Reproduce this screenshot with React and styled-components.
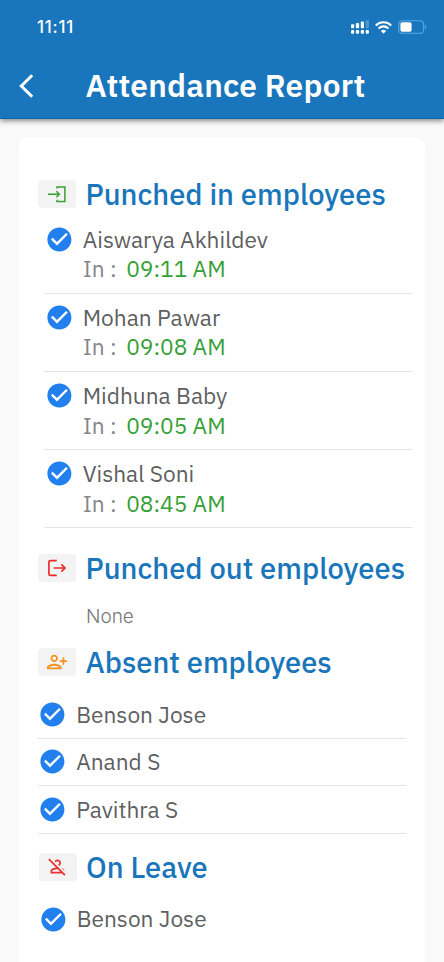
import React from "react";
import styled, { createGlobalStyle } from "styled-components";
import {
  MdCheckCircle,
  MdOutlinePersonAddAlt1,
  MdOutlinePersonOff,
} from "react-icons/md";

const punchedIn = [
  { name: "Aiswarya Akhildev", time: "09:11 AM" },
  { name: "Mohan Pawar", time: "09:08 AM" },
  { name: "Midhuna Baby", time: "09:05 AM" },
  { name: "Vishal Soni", time: "08:45 AM" },
];
const absent = ["Benson Jose", "Anand S", "Pavithra S"];
const onLeave = ["Benson Jose"];

const SignalIcon = () => (
  <svg width="18" height="14" viewBox="0 0 18 14" fill="#fff">
    <rect x="0" y="4.2" width="3.2" height="4" rx="1" />
    <rect x="4.9" y="3" width="3.2" height="5.2" rx="1" />
    <rect x="9.8" y="1.6" width="3.2" height="6.6" rx="1" />
    <rect x="14.7" y="0.2" width="3.2" height="8" rx="1" opacity="0.25" />
    <rect x="0" y="10" width="3.2" height="3.8" rx="1" />
    <rect x="4.9" y="10" width="3.2" height="3.8" rx="1" />
    <rect x="9.8" y="10" width="3.2" height="3.8" rx="1" />
    <rect x="14.7" y="10" width="3.2" height="3.8" rx="1" />
  </svg>
);

const WifiIcon = () => (
  <svg width="17" height="13" viewBox="0 0 17 13" fill="none" stroke="#fff">
    <path d="M0.8 4.4a11 11 0 0 1 15.4 0" strokeWidth="2.1" />
    <path d="M3.6 7.4a7 7 0 0 1 9.8 0" strokeWidth="2.1" />
    <path d="M8.5 12.8l-2.6-2.7a3.7 3.7 0 0 1 5.2 0z" fill="#fff" stroke="none" />
  </svg>
);

const BatteryIcon = () => (
  <svg width="29" height="14" viewBox="0 0 29 14">
    <rect x="0.7" y="0.7" width="25" height="12.6" rx="3.6" fill="none" stroke="#5aa9e2" strokeWidth="1.1" />
    <rect x="2.4" y="2.3" width="11.2" height="9.4" rx="1.8" fill="#fff" />
    <path d="M27 4.8c1.6.8 1.6 3.6 0 4.4z" fill="#5aa9e2" />
  </svg>
);

const BackIcon = () => (
  <svg width="15" height="24" viewBox="0 0 15 24" fill="none" stroke="#fff" strokeWidth="3">
    <path d="M13.2 1.3L2.3 12l10.9 10.7" />
  </svg>
);

const LoginIcon = () => (
  <svg width="20" height="18" viewBox="0 0 20 18" fill="none" stroke="#35a035" strokeWidth="1.5">
    <path d="M10 3.6V1.9h7.9v14.6H10v-1.7" />
    <path d="M1 9.2h11.4M9.4 6.2l3 3-3 3" />
  </svg>
);

const LogoutIcon = () => (
  <svg width="20" height="18" viewBox="0 0 20 18" fill="none" stroke="#ee2b2b" strokeWidth="1.7">
    <path d="M9.8 1.6H3.4Q1.9 1.6 1.9 3v12q0 1.4 1.5 1.4h6.4" />
    <path d="M6.6 9h11.2M14.4 5.4L18 9l-3.6 3.6" />
  </svg>
);

const Section = ({ icon, title, top, offset }) => (
  <SectionHeader $top={top} $offset={offset}>
    <Badge>{icon}</Badge>
    <SectionTitle>{title}</SectionTitle>
  </SectionHeader>
);

const App = () => {
  return (
    <>
      <GlobalStyle />
      <Screen>
        <Header>
          <StatusBar>
            <Clock>11:11</Clock>
            <StatusIcons>
              <SignalIcon />
              <WifiIcon />
              <BatteryIcon />
            </StatusIcons>
          </StatusBar>
          <TitleBar>
            <BackIcon />
            <PageTitle>Attendance Report</PageTitle>
          </TitleBar>
        </Header>
        <Card>
          <Section icon={<LoginIcon />} title="Punched in employees" top={42.6} />
          <PunchList>
            {punchedIn.map((person) => (
              <PunchRow key={person.name}>
                <Check />
                <div>
                  <Name>{person.name}</Name>
                  <TimeLine>
                    <TimeLabel>In :</TimeLabel>
                    <Time>{person.time}</Time>
                  </TimeLine>
                </div>
              </PunchRow>
            ))}
          </PunchList>
          <Section icon={<LogoutIcon />} title="Punched out employees" top={25.7} />
          <EmptyText>None</EmptyText>
          <Section
            icon={<MdOutlinePersonAddAlt1 size={22} color="#f39422" />}
            title="Absent employees"
            top={18}
          />
          <PlainList $top={14.8}>
            {absent.map((name) => (
              <PlainRow key={name}>
                <Check />
                <Name>{name}</Name>
              </PlainRow>
            ))}
          </PlainList>
          <Section
            icon={<MdOutlinePersonOff size={21} color="#e8332f" />}
            title="On Leave"
            top={18.8}
            offset={0.5}
          />
          <PlainList $top={14} $offset={0.5}>
            {onLeave.map((name) => (
              <PlainRow key={name} $last>
                <Check />
                <Name>{name}</Name>
              </PlainRow>
            ))}
          </PlainList>
        </Card>
      </Screen>
    </>
  );
};

const GlobalStyle = createGlobalStyle`
  * {
    box-sizing: border-box;
  }
  body {
    margin: 0;
    background: #f9f9f9;
    overflow: hidden;
    font-family: "IBM Plex Sans", "Noto Sans", sans-serif;
  }
  svg {
    flex-shrink: 0;
  }
`;
const Screen = styled.div`
  display: flex;
  flex-direction: column;
  width: 444px;
  height: 962px;
  overflow: hidden;
  background: #f9f9f9;
`;
const Header = styled.header`
  flex-shrink: 0;
  height: 119px;
  color: #fff;
  background: #1976bd;
  border-bottom: 1px solid #0d66aa;
  box-shadow: 0 2px 5px rgba(0, 0, 0, 0.45);
`;
const StatusBar = styled.div`
  display: flex;
  justify-content: space-between;
  align-items: center;
  height: 54px;
  padding: 0 17px 0 37px;
`;
const Clock = styled.span`
  font-family: Inter, sans-serif;
  font-size: 16.8px;
  font-weight: 500;
  letter-spacing: 0.8px;
`;
const StatusIcons = styled.div`
  display: flex;
  align-items: center;
  gap: 6px;
`;
const TitleBar = styled.div`
  display: flex;
  align-items: center;
  gap: 52px;
  height: 64px;
  padding: 0 0 1px 18.5px;
`;
const PageTitle = styled.h1`
  margin: 0;
  font-size: 31.6px;
  line-height: 41px;
  font-weight: 600;
  letter-spacing: 0.25px;
  white-space: nowrap;
`;
const Card = styled.main`
  flex: 1;
  min-height: 0;
  margin: 18px 19px 0;
  padding: 0 0 0 19px;
  border-radius: 10px 10px 0 0;
  background: #fff;
`;
const SectionHeader = styled.div`
  display: flex;
  align-items: center;
  gap: 9.5px;
  height: 29px;
  margin: ${(p) => p.$top}px 0 0 ${(p) => p.$offset || 0}px;
`;
const Badge = styled.div`
  display: flex;
  justify-content: center;
  align-items: center;
  width: 38px;
  height: 28px;
  border-radius: 4px;
  background: #f3f3f3;
`;
const SectionTitle = styled.h2`
  margin: 0;
  color: #1a76ba;
  font-size: 29.1px;
  line-height: 36px;
  font-weight: 500;
  white-space: nowrap;
`;
const PunchList = styled.div`
  width: 369px;
  margin: 6.9px 0 0 6px;
`;
const PunchRow = styled.div`
  display: flex;
  gap: 9px;
  height: 78.2px;
  padding: 9.2px 0 0 0.9px;
  border-bottom: 1px solid #e6e6e6;
`;
const Check = styled(MdCheckCircle)`
  width: 28.8px;
  height: 28.8px;
  color: #2180ee;
`;
const Name = styled.div`
  color: #5e5f61;
  font-size: 22.7px;
  line-height: 29.5px;
  white-space: nowrap;
`;
const TimeLine = styled.div`
  display: flex;
  gap: 9.5px;
  font-size: 22.7px;
  line-height: 29.5px;
  white-space: nowrap;
`;
const TimeLabel = styled.span`
  width: 34px;
  color: #85868a;
`;
const Time = styled.span`
  color: #35a035;
`;
const EmptyText = styled.p`
  height: 24px;
  margin: 22.3px 0 0 48px;
  color: #76777a;
  font-family: Inter, sans-serif;
  font-size: 19px;
  line-height: 24px;
  font-weight: 300;
`;
const PlainList = styled.div`
  width: 368px;
  margin: ${(p) => p.$top}px 0 0 ${(p) => p.$offset || 0}px;
`;
const PlainRow = styled.div`
  display: flex;
  align-items: center;
  gap: 9.4px;
  height: 47.5px;
  border-bottom: ${(p) => (p.$last ? "0" : "1px solid #e6e6e6")};
`;

export default App;
